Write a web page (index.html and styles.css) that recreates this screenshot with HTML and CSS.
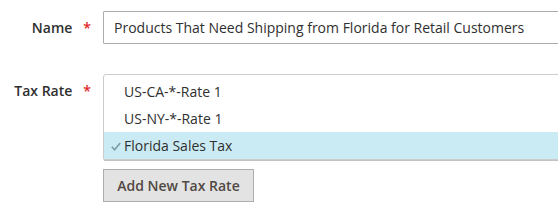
FILE: index.html
```html
<!DOCTYPE html>
<html lang="en">

<head>
    <meta charset="UTF-8">
    <meta name="viewport" content="width=device-width, initial-scale=1.0">
    <title>Tax Rule</title>
    <link rel="stylesheet" href="styles.css">
</head>

<body>
    <form class="rule-form" action="#" method="post">
        <div class="field field-name">
            <label class="field-label" for="name"><span>Name</span></label>
            <div class="field-control">
                <input type="text" class="text-input" id="name" name="name"
                    value="Products That Need Shipping from Florida for Retail Customers">
            </div>
        </div>
        <div class="field field-rates">
            <label class="field-label"><span>Tax Rate</span></label>
            <div class="field-control">
                <div class="multiselect">
                    <div class="option">US-CA-*-Rate 1</div>
                    <div class="option">US-NY-*-Rate 1</div>
                    <div class="option selected">
                        <svg class="check" viewBox="0 0 10 9">
                            <polyline points="0.8,4.8 3.6,7.8 9.2,1" />
                        </svg>
                        Florida Sales Tax
                    </div>
                </div>
                <button type="button" class="action-add">Add New Tax Rate</button>
            </div>
        </div>
    </form>
</body>

</html>
```

FILE: styles.css
```css
body {
    font-family: "Open Sans", "Liberation Sans", sans-serif;
    margin: 0;
    padding: 0;
    background-color: #fff;
    color: #303030;
    overflow: hidden;
}

.rule-form {
    padding-top: 11px;
}

.field {
    display: flex;
    align-items: flex-start;
}

.field-name {
    margin-bottom: 30px;
}

.field-label {
    width: 91px;
    flex-shrink: 0;
    text-align: right;
    font-size: 14px;
    font-weight: 600;
    line-height: 33px;
    margin-right: 12px;
}

.field-label span:after {
    content: '*';
    color: #e22626;
    font-size: 14px;
    margin-left: 11px;
}

.field-rates .field-label {
    line-height: 20px;
    padding-top: 7px;
}

.field-control {
    width: 470px;
    flex-shrink: 0;
}

.text-input {
    box-sizing: border-box;
    width: 100%;
    height: 33px;
    padding: 0 10px;
    border: 1px solid #adadad;
    border-radius: 1px;
    font-family: inherit;
    font-size: 14px;
    color: #303030;
}

.multiselect {
    border: 1px solid #cccccc;
    border-radius: 3px 0 0 1px;
    padding-top: 3px;
    box-shadow: 0 2px 0 -1px #c2c2c2;
    margin-bottom: 9px;
}

.option {
    height: 27px;
    line-height: 27px;
    padding-left: 20px;
    font-size: 14px;
    position: relative;
}

.option.selected {
    background-color: #cbebf4;
}

.check {
    position: absolute;
    left: 7px;
    top: 10px;
    width: 10px;
    height: 9px;
    fill: none;
    stroke: #7d9aa3;
    stroke-width: 1.6;
}

.action-add {
    box-sizing: border-box;
    width: 151px;
    height: 33px;
    background-color: #e3e3e3;
    border: 1px solid #adadad;
    border-radius: 0;
    color: #514943;
    font-family: inherit;
    font-size: 14px;
    font-weight: 600;
    padding: 0;
    cursor: pointer;
}
```
